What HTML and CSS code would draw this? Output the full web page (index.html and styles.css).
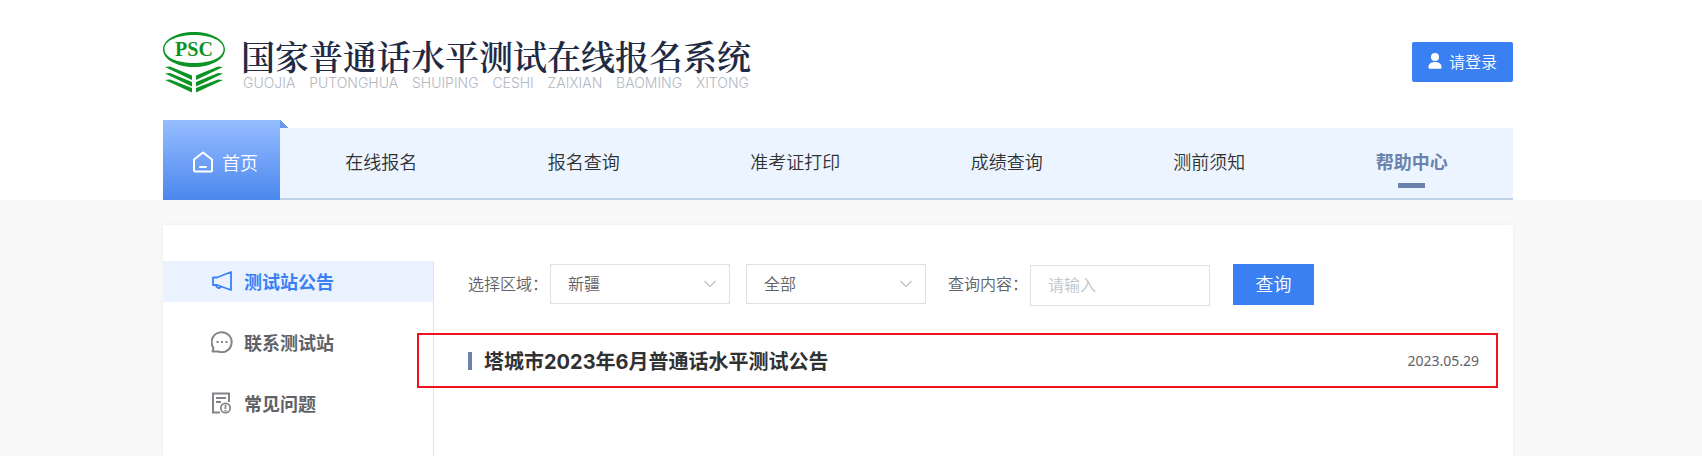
FILE: index.html
```html
<!DOCTYPE html>
<html lang="zh-CN">
<head>
<meta charset="utf-8">
<title>国家普通话水平测试在线报名系统</title>
<link rel="stylesheet" href="styles.css">
</head>
<body>
<header class="site-header">
  <div class="container">
    <div class="brand-row">
      <div class="brand">
        <svg class="brand-mark" width="62" height="62" viewBox="0 0 62 62" aria-hidden="true">
          <path fill="#0b9423" fill-rule="evenodd" d="M31 0C48 0 62 7.500 62 17.500S48 35 31 35 0 27.500 0 17.500 14 0 31 0ZM31 3C16 3 1.500 8 1.500 17S15 31 31 31 60.500 26 60.500 17 46 3 31 3Z"/>
          <text class="brand-letters" x="31" y="24" text-anchor="middle">PSC</text>
          <g fill="#0b9423">
            <path d="M2 35 7 34.500 29 43.500V48ZM2 41.500 7 41 29 50V54.500ZM2 48 7 47.500 29 56V60.500Z"/>
            <path d="M60 35 55 34.500 33 43.500V48ZM60 41.500 55 41 33 50V54.500ZM60 48 55 47.500 33 56V60.500Z"/>
          </g>
        </svg>
        <div class="brand-text">
          <h1 class="brand-title">国家普通话水平测试在线报名系统</h1>
          <p class="brand-pinyin"><span>GUOJIA</span> <span>PUTONGHUA</span> <span>SHUIPING</span> <span>CESHI</span> <span>ZAIXIAN</span> <span>BAOMING</span> <span>XITONG</span></p>
        </div>
      </div>
      <button class="login" type="button">
        <svg width="14" height="16" viewBox="0 0 14 16" fill="#fff" aria-hidden="true"><circle cx="7" cy="4" r="4"/><path d="M0.500 15C0 11 3 9 7 9s7 2 6.500 6Q13.400 15.700 12.500 15.700h-11Q.6 15.700.5 15Z"/></svg>
        请登录
      </button>
    </div>
    <nav class="nav">
      <a class="nav-home" href="#">
        <svg width="20" height="22" viewBox="0 0 20 22" fill="none" stroke="#fff" stroke-width="2" stroke-linejoin="round" stroke-linecap="round" aria-hidden="true"><path d="M1 8.500 10 1.500l9 7V19.500q0 1-1 1H2q-1 0-1-1ZM7 16h6"/></svg>
        首页
      </a>
      <div class="nav-links">
        <a class="nav-link" href="#">在线报名</a>
        <a class="nav-link" href="#">报名查询</a>
        <a class="nav-link" href="#">准考证打印</a>
        <a class="nav-link" href="#">成绩查询</a>
        <a class="nav-link" href="#">测前须知</a>
        <a class="nav-link nav-link-active" href="#">帮助中心</a>
      </div>
    </nav>
  </div>
</header>
<div class="container page">
  <div class="card">
    <aside class="sidebar">
      <a class="side-link side-link-active" href="#">
        <svg width="22" height="22" viewBox="0 0 22 22" fill="none" stroke="currentColor" stroke-width="1.800" stroke-linejoin="round" aria-hidden="true"><path d="M2 7.500h4L20 2v18L6 15H2ZM5 15.300a2.700 2.700 0 0 0 5 1.400"/></svg>
        测试站公告
      </a>
      <a class="side-link" href="#">
        <svg width="22" height="22" viewBox="0 0 22 22" fill="none" stroke="#83848a" stroke-width="2" stroke-linejoin="round" aria-hidden="true"><path d="M1.500 20.500 2.500 17A10 10 0 1 1 7 20.500Z"/><path d="M5.500 11h2M10 11h2M14.500 11h2"/></svg>
        联系测试站
      </a>
      <a class="side-link" href="#">
        <svg width="22" height="22" viewBox="0 0 22 22" fill="none" stroke="#83848a" stroke-width="2" aria-hidden="true"><path d="M9 20.500H2V1.500h16V10M5 6h10M5 10h5"/><circle cx="14.500" cy="16" r="4.700" stroke-width="1.700"/><path stroke-width="1.700" d="M14.500 13v4M14.500 18v1.300"/></svg>
        常见问题
      </a>
    </aside>
    <main class="main">
      <form class="filters">
        <label for="region">选择区域：</label>
        <span class="select-wrap select-region">
          <select id="region"><option>新疆</option></select>
          <svg width="12" height="8" viewBox="0 0 12 8" fill="none" stroke="#c0c4cc" stroke-width="1.300" aria-hidden="true"><path d="M.5 1 6 6.500 11.500 1"/></svg>
        </span>
        <span class="select-wrap">
          <select aria-label="城市"><option>全部</option></select>
          <svg width="12" height="8" viewBox="0 0 12 8" fill="none" stroke="#c0c4cc" stroke-width="1.300" aria-hidden="true"><path d="M.5 1 6 6.500 11.500 1"/></svg>
        </span>
        <label class="label-query" for="query">查询内容：</label>
        <input class="query" id="query" type="text" placeholder="请输入">
        <button class="search" type="button">查询</button>
      </form>
      <a class="notice" href="#">
        <span class="notice-title">塔城市2023年6月普通话水平测试公告</span>
        <time class="notice-date" datetime="2023-05-29">2023.05.29</time>
      </a>
    </main>
  </div>
</div>
</body>
</html>
```
FILE: styles.css
```css
* {
  box-sizing: border-box;
}

body {
  margin: 0;
  min-height: 100vh;
  display: flex;
  flex-direction: column;
  background: #f9f9f9;
  color: #606266;
  font-family: "Noto Sans CJK SC", "Noto Sans", sans-serif;
  font-size: 16px;
  font-weight: 350;
}

a {
  color: inherit;
  text-decoration: none;
}

button,
input,
select {
  font: inherit;
  color: inherit;
  margin: 0;
}

svg {
  flex: none;
}

.site-header {
  background: #fff;
}

.site-header,
.page {
  padding-right: 26px;
}

.container {
  width: 100%;
  max-width: 1350px;
  margin: 0 auto;
}

.brand-row {
  height: 120px;
  padding-top: 3px;
  display: flex;
  align-items: center;
  justify-content: space-between;
}

.brand {
  display: flex;
  gap: 16px;
  padding-top: 2px;
}

.brand-letters {
  font: bold 20px "Liberation Serif", serif;
  fill: #0b9423;
}

.brand-text {
  display: flex;
  flex-direction: column;
  padding-top: 4px;
}

.brand-title {
  margin: 0;
  font: 600 34px/40px "Noto Serif CJK SC", "Noto Sans CJK SC", serif;
  color: #1f2a44;
}

.brand-pinyin {
  margin: 0;
  display: flex;
  justify-content: space-between;
  padding: 0 2px;
  font: 300 14px/14px Inter, "Liberation Sans", sans-serif;
  color: #b4b7c0;
}

.login {
  display: flex;
  align-items: center;
  gap: 7px;
  height: 40px;
  padding: 0 16px 2px;
  border: 0;
  border-radius: 2px;
  background: #3a80f3;
  color: #fff;
}

.nav {
  display: flex;
  align-items: flex-end;
  font-size: 18px;
}

.nav-home {
  position: relative;
  display: flex;
  align-items: center;
  gap: 9px;
  height: 80px;
  padding: 4px 22px 0 30px;
  background: linear-gradient(#96bdff, #4b87ee);
  color: #fff;
}

.nav-home::after {
  content: "";
  position: absolute;
  top: 0;
  left: 100%;
  width: 8px;
  height: 8px;
  background: linear-gradient(45deg, #6a99e8 50%, transparent 50%);
}

.nav-links {
  flex: 1;
  display: flex;
  height: 72px;
  background: #ecf5ff;
  border-bottom: 2px solid #bfd1e8;
  color: #303133;
}

.nav-link {
  position: relative;
  flex: 1 1 auto;
  display: flex;
  align-items: center;
  justify-content: center;
  padding-bottom: 4px;
  white-space: nowrap;
}

.nav-link-active {
  color: #6a82ac;
  font-weight: bold;
}

.nav-link-active::after {
  content: "";
  position: absolute;
  bottom: 10px;
  width: 27px;
  height: 5px;
  background: #6a82ac;
}

.page {
  flex: 1;
  display: flex;
  max-width: 1376px;
  padding-top: 25px;
}

.card {
  flex: 1;
  display: flex;
  padding-top: 36px;
  background: #fff;
  box-shadow: 0 0 6px rgba(0, 0, 0, 0.05);
}

.sidebar {
  flex: none;
  width: 271px;
  display: flex;
  flex-direction: column;
  gap: 20px;
  border-right: 1px solid #e0e2e6;
  font-size: 18px;
  font-weight: bold;
}

.side-link {
  display: flex;
  align-items: center;
  gap: 11px;
  height: 41px;
  padding: 0 0 2px 48px;
}

.side-link-active {
  background: #eaf2ff;
  color: #3a80f3;
}

.main {
  flex: 1;
  padding: 3px 34px 0;
}

.filters {
  display: flex;
  align-items: flex-start;
}

.filters label {
  width: 82px;
  line-height: 38px;
  white-space: nowrap;
}

.select-wrap {
  position: relative;
  width: 180px;
}

.select-wrap select {
  display: block;
  width: 100%;
  height: 40px;
  padding: 0 32px 2px 17px;
  appearance: none;
  background: #fff;
  border: 1px solid #dcdfe6;
  border-radius: 0;
}

.select-wrap svg {
  position: absolute;
  top: 16px;
  right: 14px;
  pointer-events: none;
}

.select-region {
  margin-right: 16px;
}

.filters .label-query {
  margin-left: 22px;
}

.query {
  width: 180px;
  height: 41px;
  margin-top: 1px;
  padding: 0 17px 3px;
  border: 1px solid #dcdfe6;
  border-radius: 0;
}

.query::placeholder {
  color: #c0c4cc;
}

.search {
  width: 81px;
  height: 41px;
  margin-left: 23px;
  padding: 0 0 3px;
  border: 0;
  background: #3a80f3;
  color: #fff;
  font-size: 18px;
}

.notice {
  position: relative;
  display: flex;
  align-items: center;
  justify-content: space-between;
  height: 55px;
  margin-top: 27px;
}

.notice::after {
  content: "";
  position: absolute;
  inset: 0 -19px 0 -51px;
  border: 2px solid #ee131d;
}

.notice-title {
  display: flex;
  align-items: center;
  gap: 12px;
  color: #303133;
  font-family: Inter, "Noto Sans CJK SC", sans-serif;
  font-size: 20px;
  font-weight: bold;
}

.notice-title::before {
  content: "";
  width: 4px;
  height: 18px;
  background: #6a82ac;
}

.notice-date {
  font-family: "Noto Sans", sans-serif;
  font-size: 14px;
  font-weight: 400;
}
```
